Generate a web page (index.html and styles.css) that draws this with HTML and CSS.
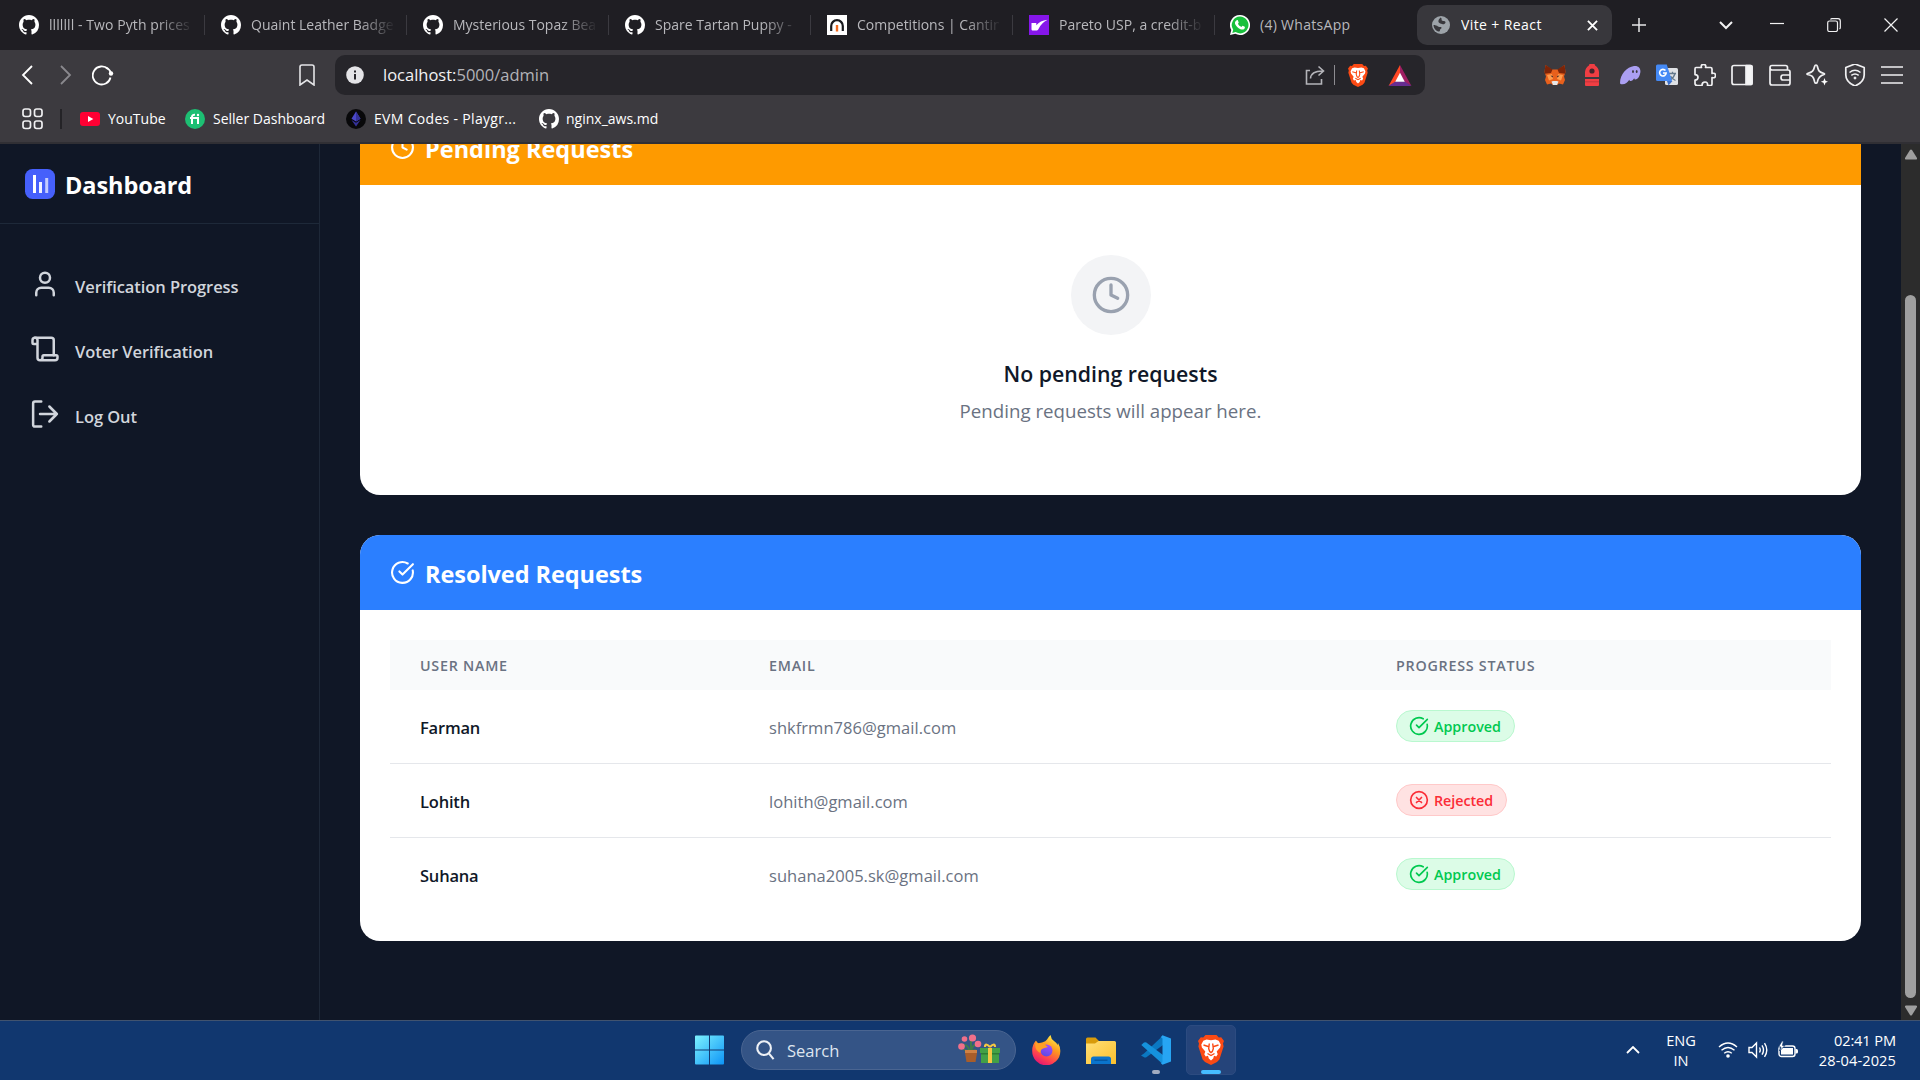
FILE: index.html
```html
<!DOCTYPE html>
<html lang="en">
<head>
<meta charset="utf-8">
<title>Vite + React</title>
<link rel="stylesheet" href="styles.css">
</head>
<body>
<svg class="defs" width="0" height="0">
  <symbol id="github" viewBox="0 0 16 16"><path fill="#fff" d="M8 0C3.58 0 0 3.58 0 8c0 3.54 2.29 6.53 5.47 7.59.4.07.55-.17.55-.38 0-.19-.01-.82-.01-1.49-2.01.37-2.53-.49-2.69-.94-.09-.23-.48-.94-.82-1.13-.28-.15-.68-.52-.01-.53.63-.01 1.08.58 1.23.82.72 1.21 1.87.87 2.33.66.07-.52.28-.87.51-1.07-1.78-.2-3.64-.89-3.64-3.95 0-.87.31-1.59.82-2.15-.08-.2-.36-1.02.08-2.12 0 0 .67-.21 2.2.82.64-.18 1.32-.27 2-.27s1.36.09 2 .27c1.53-1.04 2.2-.82 2.2-.82.44 1.1.16 1.92.08 2.12.51.56.82 1.27.82 2.15 0 3.07-1.87 3.75-3.65 3.95.29.25.54.73.54 1.48 0 1.07-.01 1.93-.01 2.2 0 .21.15.46.55.38A8.01 8.01 0 0 0 16 8c0-4.42-3.58-8-8-8z"/></symbol>
  <symbol id="clock" viewBox="0 0 24 24"><circle cx="12" cy="12" r="10"/><path d="M12 6v6l4 2"/></symbol>
  <symbol id="check" viewBox="0 0 24 24"><path d="M21.801 10A10 10 0 1 1 17 3.335"/><path d="m9 11 3 3L22 4"/></symbol>
  <symbol id="cross" viewBox="0 0 24 24"><circle cx="12" cy="12" r="10"/><path d="m15 9-6 6M9 9l6 6"/></symbol>
  <symbol id="brave" viewBox="0 0 26 30">
    <path fill="#fb4a14" d="M7.5 0h11l2.3 2.5 2.4-.3L26 6l-1 2.600.6 2.800-4.200 13.200-2.400 2.400L13 30l-6-3-2.400-2.400L.4 11.400 1 8.600 0 6l2.800-3.800 2.400.3z"/>
    <path fill="#fff" d="M8.500 4.500 13 5.300l4.500-.8 3.200 1.200 2 3.700-.6 3-3.400 4.200 1 2.600-1.400 2.400-2.300-.8-.8 2.800L13 25.500l-2.200-1.900-.8-2.800-2.300.8-1.400-2.400 1-2.600-3.400-4.200-.6-3 2-3.700z"/>
    <path fill="none" stroke="#fb4a14" stroke-width="1.400" d="m5.500 10 4.700 1.500m10.300-1.500-4.700 1.500M11.300 8.500l-.6 5.200 1 2.800L13 17.600l1.300-1.100 1-2.800-.6-5.200M9.500 18.500l3.500 2 3.500-2"/>
  </symbol>
</svg>

<header class="tabs">
  <div class="tab"><svg class="favicon"><use href="#github"/></svg><span class="tab-title tab-pyth">lllllll - Two Pyth prices</span></div>
  <div class="tab"><svg class="favicon"><use href="#github"/></svg><span class="tab-title">Quaint Leather Badger</span></div>
  <div class="tab"><svg class="favicon"><use href="#github"/></svg><span class="tab-title">Mysterious Topaz Beaver</span></div>
  <div class="tab"><svg class="favicon"><use href="#github"/></svg><span class="tab-title">Spare Tartan Puppy - </span></div>
  <div class="tab"><svg class="favicon" viewBox="0 0 20 20"><path fill="#fff" d="M0 0h20v20H0z"/><path fill="none" stroke="#18191d" stroke-width="2.200" d="M4.200 16v-5a5.800 5.800 0 0 1 11.600 0v5"/><path stroke="#f26b21" stroke-width="2.400" d="M10 10v6.500"/></svg><span class="tab-title">Competitions | Cantina</span></div>
  <div class="tab"><svg class="favicon" viewBox="0 0 20 20"><path fill="#8616ea" d="M0 0h20v20H0z"/><path fill="#fff" d="M2.500 8h4.800v2.300Q11 5.500 18.500 4.700 12.500 7.500 9.500 14c-.6 1.200-1.300 1.500-2.500 1.500H4c-1 0-1.500-.6-1.500-1.600z"/></svg><span class="tab-title">Pareto USP, a credit-based</span></div>
  <div class="tab tab-last"><svg class="favicon" viewBox="0 0 20 20"><path fill="#fff" d="M10 0a10 10 0 1 1-4.700 18.800L0 20l1.300-5A10 10 0 0 1 10 0z"/><path fill="#18c03c" d="M10 1.600a8.400 8.400 0 1 1-4.400 15.500l-3.300.9.900-3.300A8.400 8.400 0 0 1 10 1.600z"/><path fill="#fff" d="M6.700 5.300c.5-.4 1-.2 1.200.2l.8 1.900c.1.400-.6 1-.8 1.300.8 1.500 1.900 2.500 3.500 3.200.4-.3.900-1.300 1.300-1.200l2 1c.4.200.1 1.500-.3 2-1 1-2.400 1.100-4 .5-2.500-1-4.300-3-5.300-5.200-.5-1.500.3-3 1.600-3.700z"/></svg><span class="tab-title">(4) WhatsApp</span></div>
  <div class="tab active"><svg class="globe" viewBox="0 0 18 18"><circle cx="9" cy="9" r="9" fill="#9da3a9"/><path fill="#38373c" d="M8.500 1.500c2 1 .5 2 1.500 3s3 0 3.500 1.500-2 2.300-2 2.300S7 7.500 6.500 6 7 3 8.500 1.500zM1.500 9c1.500 0 3.500.5 4.500 1.500s3-.2 3.500 1-1.500 1.200-1.500 2.500-.5 1.500-1.500 1.500C4 15 1.500 12 1.500 9z"/></svg><span class="tab-title">Vite + React</span><svg class="tab-close" viewBox="0 0 12 12"><path d="m1 1 10 10M11 1 1 11"/></svg></div>
  <svg class="new-tab" viewBox="0 0 14 14"><path d="M7 0v14M0 7h14"/></svg>
  <div class="window-controls">
    <svg viewBox="0 0 14 14"><path stroke-width="2" d="m1 4 6 6 6-6"/></svg>
    <svg viewBox="0 0 14 14"><path d="M0 5.500h14"/></svg>
    <svg viewBox="0 0 14 14"><rect x=".7" y="3" width="9.800" height="10.500" rx="1.800"/><path d="M3.500 1.500Q4 .7 5 .7h6q2.300 0 2.300 2.300v6.500q0 1-.8 1.500"/></svg>
    <svg viewBox="0 0 14 14"><path d="m.5.500 13 13m0-13-13 13"/></svg>
  </div>
</header>

<div class="toolbar">
  <svg class="nav-back" viewBox="0 0 12 20"><path d="M11 1 2 10l9 9"/></svg>
  <svg class="nav-forward" viewBox="0 0 12 20"><path d="m1 1 9 9-9 9"/></svg>
  <svg class="nav-reload" viewBox="0 0 22 20"><path d="M16 3.500A9 9 0 1 0 18.500 12"/><path d="M19 7.500A9 9 0 0 0 14 2"/><circle cx="19" cy="8" r="2.200" fill="#fff" stroke="none"/></svg>
  <svg class="bookmark" viewBox="0 0 16 22"><path d="M1 3q0-2 2-2h10q2 0 2 2v18l-7-5-7 5z"/></svg>
  <div class="address">
    <svg class="info" viewBox="0 0 18 18"><circle cx="9" cy="9" r="8.800" fill="#e4e4e7"/><path stroke="#26252a" stroke-width="2" d="M9 8v5.500M9 4.500v2"/></svg>
    <span class="url">localhost:<span class="url-path">5000/admin</span></span>
    <svg class="share" viewBox="0 0 20 20"><path d="M5 5.500H1.500V19h15v-5M5.500 13.500Q6 6 17.500 6M13.500 1.500 18.500 6l-5 4.500"/></svg>
    <span class="address-rule"></span>
    <svg class="shield"><use href="#brave"/></svg>
    <svg class="bat" viewBox="0 0 24 22"><path fill="#ff4724" d="M12 0 0 22l7.500-4L12 9z"/><path fill="#9e1f63" d="m12 0 12 22-7.500-4L12 9z"/><path fill="#662d91" d="M0 22h24l-7.500-5h-9z"/><path fill="#fff" d="m12 8 5 9.500H7z"/></svg>
  </div>
  <div class="extensions">
    <svg viewBox="0 0 22 22"><path fill="#e8601c" d="m1.500 1 6 4.500h7l6-4.500 1 7-1.500 4.500 1 3.500-2 4.500-4-1-1.800 1.500H8.800L7 19.500l-4 1L1 16l1-3.500L.5 8z"/><path fill="#7c2408" d="m1.500 1 7 4.500L7 9 .8 9.800.5 8zm19 0-7 4.500L15 9l6.200.8.300-1.800z"/><path fill="#ff9b4d" d="m3 11 5-1 1 5-4 1.500zm16 0-5-1-1 5 4 1.500z"/><path fill="#35262a" d="m6.500 11.500 2.500.5-.5 1.600zm9 0-2.500.5.5 1.600z"/><path fill="#e6e6e8" d="m7.500 17.500 1.800-.5h3.400l1.800.5-1.500 3.500H9z"/></svg>
    <svg viewBox="0 0 22 22"><path fill="#f03e43" d="M8.500 0h5l.6 1.600A8.500 8.500 0 0 1 18 8v5H4V8a8.500 8.500 0 0 1 3.900-6.400zM4 15h14v6q0 1-1 1H5q-1 0-1-1z"/><path stroke="#b7343a" stroke-width=".8" d="M4 17.800h14"/><circle cx="11" cy="7" r="2.600" fill="#45262d"/></svg>
    <svg viewBox="0 0 22 22"><path fill="#ab9ff2" d="M1 19C1 10 8 3 15 2c5-.6 7.500 3 6 8-.8 3-2.600 5.500-4.500 5.500-1.200 0-1-1-1.300-1.300-1 1.500-2 2.800-3.500 2.800-1.200 0-1.300-.9-1.400-1.300-1.600 2.500-4 4.600-6.800 4.600C1.800 20.300 1 20 1 19z"/><ellipse cx="14" cy="7.500" rx=".9" ry="1.500" fill="#3c3a3f"/><ellipse cx="17.700" cy="7.500" rx=".9" ry="1.500" fill="#3c3a3f"/></svg>
    <svg viewBox="0 0 22 22"><rect x="9" y="4" width="13" height="17" rx="1.500" fill="#dfe1e5"/><path stroke="#64798c" stroke-width="1.300" fill="none" d="M13 9.500h7m-3.500-1.700v1.700m2.500.3q-1.500 4.700-5.500 6.700m1-4.500q2 3.500 5 4.500"/><path fill="#3c6fc8" d="M11 17h5.500l-4 4.500z"/><path fill="#4489f5" d="M1.500.5h9.300L16 17H1.500Q0 17 0 15.500V2Q0 .5 1.500.5z"/><path stroke="#fff" stroke-width="1.600" fill="none" d="M9.500 6.600a3.300 3.300 0 1 0 .7 2.400H7"/></svg>
    <svg class="line" viewBox="0 0 22 22"><path d="M2 3.500h5.500q-1-3 2-3t2 3h5q1.500 0 1.500 1.500v4.500q3.500-1 3.500 2t-3.500 2V20q0 1.500-1.500 1.500h-3q.5-3.500-2.500-3.500T8 21.500H3.500Q1 21.500 1 19.500V16q3 0 3-2.700T1 10.600V5q0-1.500 1-1.500z"/></svg>
    <svg class="line" viewBox="0 0 22 22"><rect x="1" y="1.500" width="20" height="19" rx="2"/><path fill="#f4f4f5" d="M15 1.500h5q1 0 1 1v17q0 1-1 1h-5z"/></svg>
    <svg class="line" viewBox="0 0 22 22"><path d="M18.500 5.500v-2q0-2-2-2H3q-2 0-2 2.200T3 6h16q2 0 2 2v11q0 2-2 2H3q-2 0-2-2V4M21 11h-7q-2 0-2 2.500t2 2.500h7"/></svg>
    <svg class="line" viewBox="0 0 22 22"><path d="M10 1q1 0 1.300 1.200C12.500 7 13 8 18 9.500q1 .5 0 1-5.500 1.500-6.700 7.500-.3 1.200-1.300 1.200T8.700 18C7.500 12 6 11.500 1.500 10.500q-1-.500 0-1C6.500 8 7.500 7 8.700 2.200Q9 1 10 1z"/><path fill="#fff" stroke="none" d="m18.500 14 1 2.800 2.700 1-2.700 1-1 2.800-1-2.800-2.700-1 2.700-1z"/></svg>
    <svg class="line" viewBox="0 0 22 22"><path d="m11 0 9.200 3.500v7.500q0 7-9.200 11-9.200-4-9.200-11V3.500z"/><path stroke-width="1.500" d="M5.500 8.500q5.500-4.500 11 0m-9.200 2.900q3.700-3 7.400 0"/><circle cx="11" cy="14" r="1" fill="#fff" stroke-width="1"/></svg>
    <svg class="line" viewBox="0 0 22 22"><path d="M0 3h22M0 11h22M0 19h22"/></svg>
  </div>
</div>

<nav class="bookmarks">
  <svg class="apps" viewBox="0 0 21 22"><rect x="1" y="1" width="7.500" height="7.500" rx="2.200"/><rect x="12.500" y="1" width="7.500" height="7.500" rx="2.200"/><rect x="1" y="13" width="7.500" height="7.500" rx="2.200"/><rect x="12.500" y="13" width="7.500" height="7.500" rx="2.200"/></svg>
  <span class="bookmark-rule"></span>
  <span class="mark mark-yt"><svg viewBox="0 0 20 20"><rect y="3" width="20" height="14" rx="3" fill="#ff0033"/><path fill="#fff" d="m8 7 5.300 3L8 13z"/></svg><span>YouTube</span></span>
  <span class="mark mark-seller"><svg viewBox="0 0 20 20"><circle cx="10" cy="10" r="10" fill="#1dbf73"/><path fill="none" stroke="#fff" stroke-width="2" d="M7 15V8q0-2.500 3-2.300M5 9h8v6"/><circle cx="13" cy="6" r="1.200" fill="#fff"/></svg><span>Seller Dashboard</span></span>
  <span class="mark mark-evm"><svg viewBox="0 0 20 20"><circle cx="10" cy="10" r="10" fill="#08080a"/><path fill="#4a47c8" d="m10 2.500 4.500 7.300L10 12.500 5.500 9.800z"/><path fill="#343199" d="M10 2.500v10l4.500-2.700zM5.500 11l4.500 2.700 4.500-2.700L10 17.500z"/></svg><span>EVM Codes - Playgr...</span></span>
  <span class="mark mark-nginx"><svg><use href="#github"/></svg><span>nginx_aws.md</span></span>
</nav>

<div class="page">
  <aside class="sidebar">
    <div class="brand">
      <svg class="brand-logo" viewBox="0 0 30 30"><rect width="30" height="30" rx="7.500" fill="#4660fb"/><g stroke-width="3"><path stroke="#fff" d="M9.500 6v18"/><path stroke="#f0f2ff" d="M15.500 13v11"/><path stroke="#c3ccff" d="M21.700 9v15"/></g></svg>
      <span class="brand-name">Dashboard</span>
    </div>
    <ul class="menu">
      <li><svg viewBox="0 0 24 24"><circle cx="12" cy="7" r="4"/><path d="M19 21v-2a4 4 0 0 0-4-4H9a4 4 0 0 0-4 4v2"/></svg><span>Verification Progress</span></li>
      <li><svg viewBox="0 0 24 24"><path d="M19 17V5a2 2 0 0 0-2-2H4"/><path d="M8 21h12a2 2 0 0 0 2-2v-1a1 1 0 0 0-1-1H11a1 1 0 0 0-1 1v1a2 2 0 1 1-4 0V5a2 2 0 1 0-4 0v2a1 1 0 0 0 1 1h3"/></svg><span>Voter Verification</span></li>
      <li><svg viewBox="0 0 24 24"><path d="M9 22H4a1.500 1.500 0 0 1-1.500-1.500V3.500A1.500 1.500 0 0 1 4 2h5M8 12h13.500M15.500 6l6 6-6 6"/></svg><span>Log Out</span></li>
    </ul>
  </aside>
  <main class="content">
    <section class="card">
      <h2 class="card-head pending"><svg><use href="#clock"/></svg><span>Pending Requests</span></h2>
      <div class="empty">
        <div class="empty-icon"><svg><use href="#clock"/></svg></div>
        <p class="empty-title">No pending requests</p>
        <p class="empty-text">Pending requests will appear here.</p>
      </div>
    </section>
    <section class="card">
      <h2 class="card-head resolved"><svg><use href="#check"/></svg><span>Resolved Requests</span></h2>
      <div class="table-wrap">
        <table class="requests">
          <colgroup><col class="col-name"><col class="col-email"><col></colgroup>
          <thead><tr><th>USER NAME</th><th>EMAIL</th><th>PROGRESS STATUS</th></tr></thead>
          <tbody>
            <tr><td class="name">Farman</td><td class="email">shkfrmn786@gmail.com</td><td><span class="pill approved"><svg><use href="#check"/></svg><span>Approved</span></span></td></tr>
            <tr><td class="name">Lohith</td><td class="email">lohith@gmail.com</td><td><span class="pill rejected"><svg><use href="#cross"/></svg><span>Rejected</span></span></td></tr>
            <tr><td class="name">Suhana</td><td class="email">suhana2005.sk@gmail.com</td><td><span class="pill approved"><svg><use href="#check"/></svg><span>Approved</span></span></td></tr>
          </tbody>
        </table>
      </div>
    </section>
  </main>
  <div class="scrollbar">
    <svg class="arrow" viewBox="0 0 14 11"><path fill="#9f9f9f" d="M6 1q1-1 2 0l5 8q.5 1.500-1 1.500H2Q.5 10.500 1 9z"/></svg>
    <div class="thumb"></div>
    <svg class="arrow" viewBox="0 0 14 11"><path fill="#9f9f9f" d="M6 10q1 1 2 0l5-8q.5-1.500-1-1.500H2Q.5.500 1 2z"/></svg>
  </div>
</div>

<footer class="taskbar">
  <div class="task-center">
    <svg class="start" viewBox="0 0 30 30"><defs><linearGradient id="win" x1="0" y1="0" x2="1" y2="1"><stop offset="0" stop-color="#7df2ff"/><stop offset="1" stop-color="#0d94f6"/></linearGradient></defs><path fill="url(#win)" d="M1 0h13.500v14.500H0V1q0-1 1-1zm14.500 0H29q1 0 1 1v13.500H15.500zM0 15.500h14.500V30H1q-1 0-1-1zm15.500 0H30V29q0 1-1 1H15.500z"/></svg>
    <div class="search">
      <svg class="magnifier" viewBox="0 0 20 22"><circle cx="8.500" cy="8.500" r="7.200"/><path d="m13.500 14 5 6"/></svg>
      <span>Search</span>
      <svg class="gifts" viewBox="0 0 44 32"><g fill="none" stroke="#3e7b4b" stroke-width="2"><path d="M12 18Q10 10 5 11m8 7V6m0 12q1-7 6-8M12 17q-5 0-6-2m7 2 5-1"/></g><g fill="#f0708a"><circle cx="3.500" cy="12.500" r="3.300"/><circle cx="6.500" cy="5" r="2.800"/><circle cx="14.500" cy="4" r="3.600"/><circle cx="20" cy="10" r="3.300"/></g><path fill="#a85d2a" d="M7 16h12v3l-1.500 9h-9L7 19z"/><path fill="#cf8144" d="M7 16h12v3H7z"/><path fill="#43a047" d="M22 14h20v5h-1v10H23V19h-1z"/><path fill="#2e7d32" d="M23 19h18v1.500H23z"/><path fill="#f5c842" d="M30 14h4v15h-4z"/><path fill="none" stroke="#f5c842" stroke-width="2.200" d="M32 13q-5-5-5 0m5 0q5-5 5 0"/></svg>
    </div>
    <svg class="firefox" viewBox="0 0 30 30"><defs><linearGradient id="fox" x1=".8" y1="0" x2=".3" y2="1"><stop offset="0" stop-color="#fff44f"/><stop offset=".4" stop-color="#ff9a1f"/><stop offset=".75" stop-color="#ff4050"/><stop offset="1" stop-color="#e01574"/></linearGradient><linearGradient id="orb" x1=".7" y1="0" x2=".3" y2="1"><stop offset="0" stop-color="#a34bff"/><stop offset="1" stop-color="#5b4be0"/></linearGradient></defs><path fill="url(#fox)" d="M19.500 0q.5 4 3.500 6t3.500 4l.5-2q2.500 4 2.300 8.500A14 14 0 0 1 1.200 16Q1 10 5 5.500l1 3 5-1q4-1 5-3t3.500-4.500z"/><circle cx="15.500" cy="15.500" r="6" fill="url(#orb)"/><path fill="#ff9f25" d="M5 6 7.500 8.500q5-1 7.500 2l2 1.500-5 1.500q-3 1.500-2.500 4.500-4-2-5-5.500T5 6z"/></svg>
    <svg class="folder" viewBox="0 0 30 28"><defs><linearGradient id="fold" x1="0" y1="0" x2="1" y2="1"><stop offset="0" stop-color="#ffdf77"/><stop offset="1" stop-color="#fbc02d"/></linearGradient></defs><path fill="#d89b0b" d="M0 2Q0 .5 1.500.5h8L13 4h14v4H0z"/><path fill="url(#fold)" d="M0 6.500h9L12.500 4H28.500Q30 4 30 5.500V27H0z"/><path fill="#0b74cc" d="M5 27v-5q0-2.500 2.500-2.500h15q2.500 0 2.500 2.500v5z"/><path stroke="#07539c" stroke-width="1.300" d="M8.500 23.200h13"/></svg>
    <div class="app vscode"><svg viewBox="0 0 30 30"><path fill="#0b78c2" d="m3 18.500 17-16L22 1v9L5 22.500H3.500L0 20.500z"/><path fill="#1592dd" d="M3 7.500 5 7.300 22 20v9l-2-1.500L.3 10z"/><path fill="#27a5f3" d="M21.500.3 30 3.500v23l-8.500 3.200-2-2q2 .5 2-1.500V4q0-2-2-1.500z"/></svg><span class="dot"></span></div>
    <div class="app active-app"><svg><use href="#brave"/></svg><span class="bar"></span></div>
  </div>
  <div class="tray">
    <svg class="tray-up" viewBox="0 0 14 8"><path d="m1 7 6-6 6 6"/></svg>
    <div class="language"><span>ENG</span><span>IN</span></div>
    <div class="status">
      <svg viewBox="0 0 20 18"><path d="M1 6q9-8 18 0M3.500 9.200q6.500-5.500 13 0M6.200 12.300q3.800-3.300 7.600 0"/><circle cx="10" cy="15" r="1.800" fill="#fff" stroke="none"/></svg>
      <svg viewBox="0 0 20 18"><path d="M1 6.500h3L8.500 2v14L4 11.500H1zM11.500 6.500q1.500 2.500 0 5M14 4.300q3 4.700 0 9.400M16.500 2.200q4.600 6.800 0 13.600"/></svg>
      <svg viewBox="0 0 20 18"><rect x="1" y="5" width="16" height="10.500" rx="2.500"/><rect x="3" y="7" width="12" height="6.500" fill="#fff" stroke="none"/><path fill="#fff" stroke="none" d="M17.500 8h1q1.500 0 1.500 1.500v1.500q0 1.500-1.500 1.500h-1z"/><path fill="#fff" stroke="#12386f" stroke-width=".8" d="M4 0 .5 6H3L1.500 10 7 4.500H4.500L5.500 0z"/></svg>
    </div>
    <div class="clock"><span>02:41 PM</span><span>28-04-2025</span></div>
  </div>
</footer>
</body>
</html>
```
FILE: styles.css
```css
* { box-sizing: border-box; }
body {
  margin: 0;
  width: 1920px;
  height: 1080px;
  overflow: hidden;
  display: flex;
  flex-direction: column;
  background: #101726;
  font-family: "Open Sans", "Noto Sans", sans-serif;
  color: #fff;
}
svg { display: block; flex: none; }
.defs { position: absolute; }

/* tab strip */
.tabs { height: 50px; flex: none; display: flex; align-items: center; padding-left: 3px; background: #1f1e23; }
.tab { width: 202px; height: 20px; display: flex; align-items: center; gap: 10px; padding-left: 16px; border-right: 1px solid #3b3a40; flex: none; }
.favicon { width: 20px; height: 20px; }
.tab-title {
  width: 142px;
  overflow: hidden;
  white-space: nowrap;
  font-size: 14px;
  line-height: 20px;
  color: #b8b8bc;
  -webkit-mask-image: linear-gradient(90deg, #000 108px, transparent 145px);
  mask-image: linear-gradient(90deg, #000 108px, transparent 145px);
}
.tab-pyth { letter-spacing: .08px; }
.tab-last { border-right-color: transparent; }
.tab-last .favicon { margin-left: -1px; }
.tab-last .tab-title, .active .tab-title { -webkit-mask-image: none; mask-image: none; }
.tab-last .tab-title { letter-spacing: .3px; }
.tab.active { width: 195px; height: 40px; border: 0; border-radius: 10px; background: #38373c; padding: 0 14px 0 15px; }
.active .tab-title { color: #fff; width: 116px; margin-left: 1px; letter-spacing: .4px; }
.globe { width: 18px; height: 18px; }
.tab-close { width: 11px; height: 11px; fill: none; stroke: #fff; stroke-width: 2; }
.new-tab { width: 14px; height: 14px; margin-left: 20px; fill: none; stroke: #e6e6e8; stroke-width: 1.5; }
.window-controls { display: flex; gap: 43px; margin: 0 22px 0 auto; }
.window-controls svg { width: 14px; height: 14px; fill: none; stroke: #f2f2f3; stroke-width: 1.2; }
.window-controls svg:first-child { margin-right: -6px; }

/* address row */
.toolbar { height: 50px; flex: none; display: flex; align-items: center; padding: 0 17px 0 21px; background: #3c3a3f; }
.nav-back, .nav-forward, .nav-reload, .bookmark { fill: none; stroke: #fff; stroke-width: 1.8; }
.nav-back, .nav-forward { width: 12px; height: 20px; }
.nav-forward { margin-left: 27px; stroke: #8a898e; }
.nav-reload { width: 22px; height: 21px; margin-left: 20px; }
.bookmark { width: 16px; height: 22px; margin-left: 185px; stroke: #e4e4e7; stroke-width: 1.6; }
.address { width: 1090px; height: 40px; margin-left: 20px; display: flex; align-items: center; border-radius: 10px; background: #26252a; padding: 0 13px 0 11px; }
.info { width: 18px; height: 18px; }
.url { margin-left: 19px; padding-bottom: 2px; font-size: 16.500px; color: #f2f2f4; }
.url-path { color: #b3b3b8; }
.share { width: 20px; height: 20px; margin-left: auto; fill: none; stroke: #b4b4b9; stroke-width: 1.6; }
.address-rule { width: 1px; height: 20px; margin: 0 13px 0 9px; background: #8d8c91; }
.shield { width: 20px; height: 23px; }
.bat { width: 24px; height: 21px; margin-left: 20px; }
.extensions { display: flex; gap: 15.500px; margin-left: auto; }
.extensions svg { width: 22px; height: 22px; }
.extensions .line { fill: none; stroke: #f0f0f2; stroke-width: 1.7; stroke-linejoin: round; }

/* bookmarks row */
.bookmarks { height: 44px; flex: none; display: flex; align-items: center; padding: 0 22px 4px; background: #3c3a3f; border-bottom: 2px solid #302f34; font-size: 14px; }
.apps { width: 21px; height: 22px; fill: none; stroke: #f0f0f2; stroke-width: 1.7; }
.bookmark-rule { width: 2px; height: 20px; margin: 0 18px 0 17px; background: #242327; }
.mark { display: flex; align-items: center; gap: 8px; white-space: nowrap; }
.mark > span { padding-bottom: 1px; }
.mark svg { width: 20px; height: 20px; }
.mark-yt { width: 105px; }
.mark-seller { width: 161px; }
.mark-evm { width: 193px; letter-spacing: .32px; }
.mark-nginx { gap: 7px; }

/* page */
.page { height: 876px; flex: none; display: flex; overflow: hidden; }
.sidebar { width: 320px; flex: none; border-right: 1px solid #1e2838; }
.brand { height: 80px; display: flex; align-items: center; gap: 10px; padding-left: 25px; border-bottom: 1px solid #1e2939; }
.brand-logo { width: 30px; height: 30px; }
.brand-name { padding-top: 2px; font-size: 23.500px; font-weight: 700; letter-spacing: -.08px; }
.menu { list-style: none; margin: 0; padding: 45px 0 0 30px; display: flex; flex-direction: column; gap: 35px; font-size: 16.500px; font-weight: 600; letter-spacing: -.07px; color: #d1d5dc; }
.menu li { height: 30px; display: flex; align-items: center; gap: 15px; }
.menu li > span { padding-top: 4px; }
.menu svg { width: 30px; height: 30px; fill: none; stroke: #d1d5dc; stroke-width: 2; stroke-linecap: round; stroke-linejoin: round; }

.content { flex: 1; display: flex; flex-direction: column; justify-content: flex-end; gap: 40px; padding: 0 40px 79px; }
.card { flex: none; overflow: hidden; border-radius: 20px; background: #fff; }
.card-head { margin: 0; height: 75px; display: flex; align-items: center; gap: 10px; padding-left: 30px; font-size: 23.500px; font-weight: 700; }
.card-head svg, .empty-icon svg, .pill svg { fill: none; stroke: currentColor; stroke-width: 2; stroke-linecap: round; stroke-linejoin: round; }
.card-head svg { width: 25px; height: 25px; }
.card-head span { padding-top: 2px; }
.pending { background: #fe9a00; }
.resolved { background: #2b7fff; }
.resolved span { letter-spacing: -.06px; }
.empty { height: 310px; display: flex; flex-direction: column; align-items: center; padding-top: 70px; }
.empty-icon { width: 80px; height: 80px; display: grid; place-items: center; border-radius: 50%; background: #f3f4f6; color: #99a1af; }
.empty-icon svg { width: 40px; height: 40px; }
.empty p { margin: 0; }
.empty-title { padding-top: 21px; font-size: 21.300px; line-height: 35px; font-weight: 600; letter-spacing: 0; color: #101828; }
.empty-text { padding-top: 5px; font-size: 18.700px; line-height: 30px; color: #6a7282; }
.table-wrap { padding: 30px; }
.requests { width: 100%; table-layout: fixed; border-collapse: separate; border-spacing: 0; }
.col-name { width: 349px; }
.col-email { width: 627px; }
.requests th { height: 50px; padding: 0 30px; text-align: left; font-size: 14.300px; font-weight: 600; letter-spacing: .75px; color: #6a7282; background: #f9fafb; }
.requests td { height: 74px; padding: 0 30px 1px; border-bottom: 1px solid #e5e7eb; }
.requests tr:last-child td { height: 73px; border: 0; }
.requests .name, .requests .email { padding-top: 2px; font-size: 16.500px; }
.requests .name { font-weight: 600; letter-spacing: -.2px; color: #101828; }
.requests .email { letter-spacing: .03px; color: #6a7282; }
.pill { width: fit-content; height: 32px; display: flex; align-items: center; gap: 5px; padding: 0 13px 0 12px; border: 1px solid; border-radius: 16px; font-size: 14.300px; font-weight: 600; letter-spacing: 0; }
.pill svg { width: 20px; height: 20px; }
.approved { color: #00c950; background: #dcfce7; border-color: #b9f8cf; }
.rejected { color: #fb2c36; background: #ffe2e2; border-color: #ffc9c9; letter-spacing: -.05px; }

.scrollbar { width: 19px; flex: none; display: flex; flex-direction: column; align-items: center; background: #2c2c2c; padding: 5px 0 4px; }
.arrow { width: 14px; height: 11px; }
.thumb { width: 11px; height: 703px; margin: 135px 0 auto; border-radius: 6px; background: #9f9f9f; }

/* taskbar */
.taskbar { height: 60px; flex: none; display: flex; align-items: center; padding-bottom: 1px; background: #11376f; border-top: 1px solid #41536f; }
.task-center { display: flex; align-items: center; padding-left: 695px; }
.start { width: 29px; height: 30px; }
.search { width: 275px; height: 40px; margin-left: 17px; display: flex; align-items: center; border: 1px solid #4a6591; border-radius: 20px; background: #345486; padding: 0 13px 0 14px; font-size: 16.500px; color: #dfe5ef; }
.magnifier { width: 19px; height: 21px; margin-right: 12px; fill: none; stroke: #eef1f6; stroke-width: 2.2; }
.gifts { width: 44px; height: 32px; margin-left: auto; }
.firefox { width: 30px; height: 30px; margin-left: 15px; }
.folder { width: 30px; height: 28px; margin: 2px 0 0 25px; }
.app { position: relative; width: 50px; height: 50px; border-radius: 5px; display: grid; place-items: center; }
.app svg { width: 30px; height: 30px; }
.vscode { margin-left: 15px; }
.active-app { margin-left: 5px; background: #25447a; border: 1px solid #2c4b80; }
.active-app svg { width: 26px; }
.dot, .bar { position: absolute; bottom: 1px; height: 4px; border-radius: 2px; }
.dot { left: 21px; width: 8px; background: #a2acc0; }
.bar { left: 14px; width: 20px; bottom: 0; background: #46bdff; }
.tray { display: flex; align-items: center; margin-left: auto; padding: 0 24px 1px 0; font-size: 14.600px; line-height: 20px; }
.tray-up { width: 14px; height: 8px; margin-right: 25px; fill: none; stroke: #fff; stroke-width: 1.8; }
.language { width: 32px; display: flex; flex-direction: column; align-items: center; margin-right: 21px; }
.status { display: flex; gap: 10px; }
.status svg { width: 20px; height: 18px; fill: none; stroke: #fff; stroke-width: 1.4; }
.clock { width: 78px; display: flex; flex-direction: column; align-items: flex-end; margin-left: 20px; white-space: nowrap; }
.clock span { letter-spacing: .1px; }
.clock span:first-child { letter-spacing: -.1px; }
```
